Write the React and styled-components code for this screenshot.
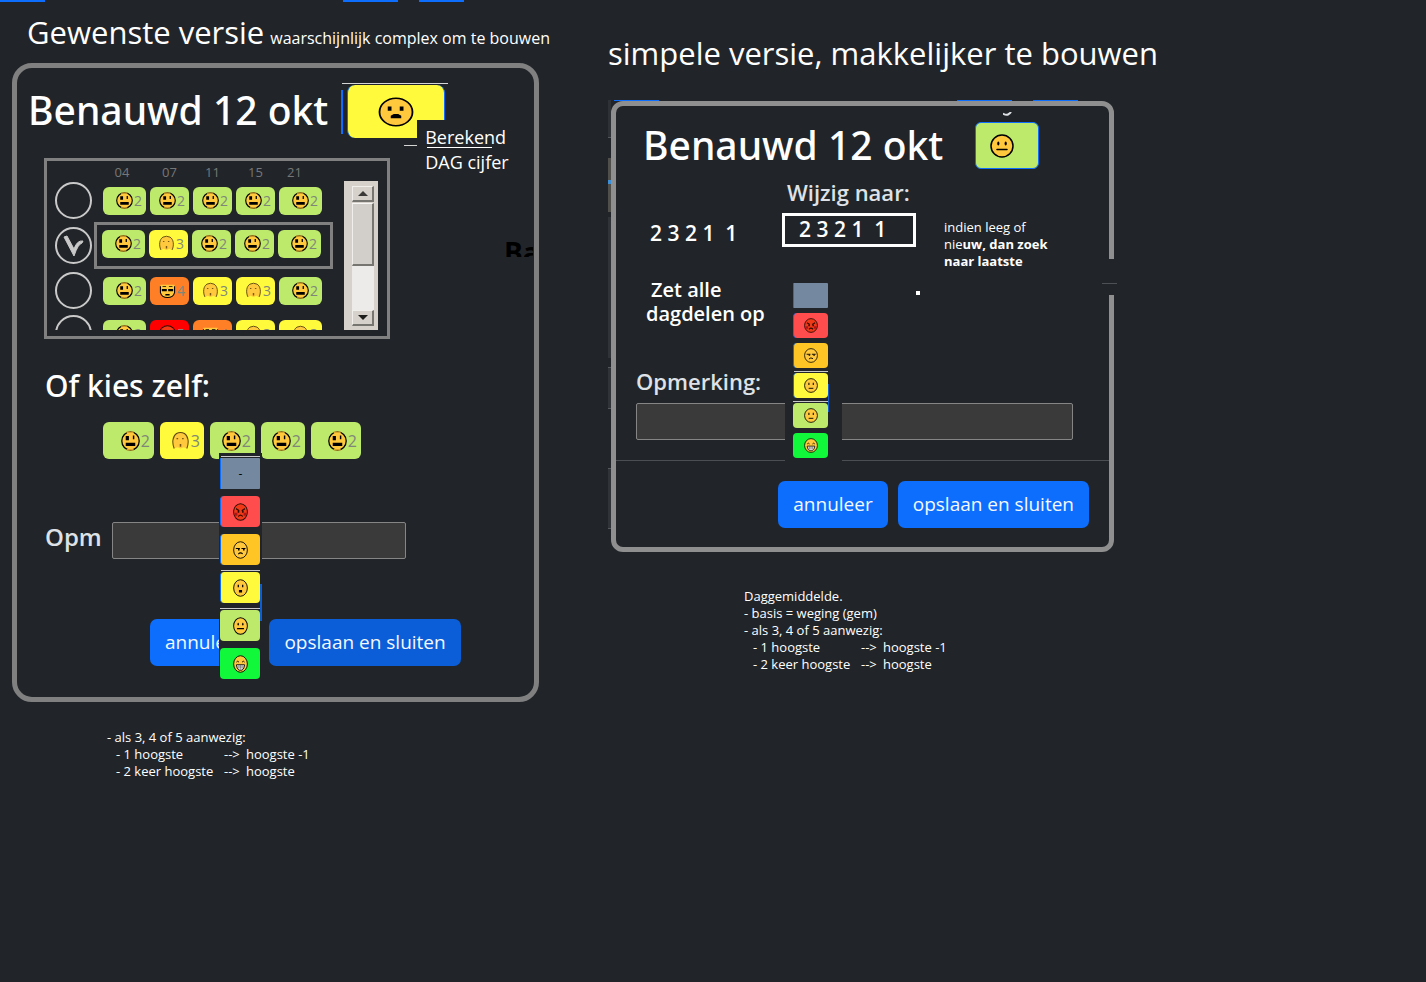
import React from 'react';
import styled, { createGlobalStyle, css } from 'styled-components';

const GlobalStyle = createGlobalStyle`
  * { box-sizing: border-box; }
  body {
    margin: 0;
    background: #212529;
    color: #fff;
    font-family: 'Open Sans', 'Noto Sans', sans-serif;
  }
  h1, h2, h3, p { margin: 0; }
  button, input { font-family: inherit; }
`;

const tones = {
  lime: '#bdea6b',
  yellow: '#fffa3c',
  orange: '#ff7f27',
  amber: '#ffc525',
  red: '#ff0000',
  coral: '#ff4d4d',
  green: '#11f73a',
  slate: '#74899f',
};

/* ---------- faces ---------- */

const FaceSvg = styled.svg`
  display: block;
  flex: none;
  width: ${(p) => p.$w}px;
  height: ${(p) => p.$h || p.$w}px;
`;

const faces = {
  blocky: (
    <>
      <circle cx="12" cy="12" r="11" fill="#ffc83d" stroke="#000" strokeWidth="1.600" />
      <path d="M7 1.500h9M7 22.500h9" stroke="#d9a428" strokeWidth="1.600" />
      <path d="M6 6h4v5H6zM15 5.500h1.800V10H15zM6 14h12v4H6z" fill="#000" />
    </>
  ),
  pale: (
    <>
      <path d="M4 21C1 14 2 6 7 3q5-2.500 10 0c5 3 6 11 3 18l-4-1.500-4 1.500-4-1.500z" fill="#ffc83d" />
      <path d="M4 21C1 14 2 6 7 3q5-2.500 10 0c5 3 6 11 3 18" fill="none" stroke="#5e4710" strokeWidth="1.300" />
      <path d="M7 8.500h2v1.500H7zM14 8.500h2v1.500h-2zM11 15.500h2V19h-2z" fill="#7c5a12" />
    </>
  ),
  weary: (
    <>
      <path d="M2 4h20v11q-2 7-10 7T2 15z" fill="#ffc83d" />
      <path d="M2 6v9q2 7 10 7t10-7V6" fill="none" stroke="#000" strokeWidth="1.500" />
      <path d="M4 10h7v3H4zM13 10h7v3h-7zM9 17h6v2H9zM5 6h5v1H5zM14 6h5v1h-5z" fill="#000" />
    </>
  ),
  frown: (
    <>
      <circle cx="12" cy="12" r="11" fill="#ffc83d" stroke="#000" strokeWidth="1.200" />
      <path d="M6.500 7.500h2.500V11H6.500zM14.500 7.500H17V11h-2.500zM10.500 13.500h3l2 1.500v2h-7v-2z" fill="#000" />
    </>
  ),
  neutral: (
    <>
      <circle cx="12" cy="12" r="11" fill="#ffc83d" stroke="#000" strokeWidth="1.500" />
      <ellipse cx="8.300" cy="9.500" rx="1.100" ry="1.900" />
      <ellipse cx="15.700" cy="9.500" rx="1.100" ry="1.900" />
      <path d="M7 15.500h10" stroke="#000" strokeWidth="1.500" strokeLinecap="round" />
    </>
  ),
  open: (
    <>
      <circle cx="12" cy="12" r="11" fill="#ffc83d" stroke="#000" strokeWidth="1.300" />
      <path d="M7.500 7.500h2V11h-2zM14.500 7.500h2V11h-2zM9.500 14.500h5V18h-5z" fill="#000" />
    </>
  ),
  flat: (
    <>
      <circle cx="12" cy="12" r="11" fill="#ffc83d" stroke="#000" strokeWidth="1.400" />
      <path d="M7.500 7.500h1.800V11H7.500zM15 7.500h1.800V11H15z" fill="#000" />
      <path d="M8 16.500h8" fill="none" stroke="#000" strokeWidth="1.500" />
    </>
  ),
  side: (
    <>
      <circle cx="12" cy="12" r="11" fill="#ffc83d" stroke="#000" strokeWidth="1.300" />
      <path d="M4.500 10H11M13.500 10H20M8.500 17.500q3-3 7-.500" fill="none" stroke="#000" strokeWidth="1.500" />
      <path d="M8 10.500h2.500v2H8zM16 10.500h2.500v2H16z" fill="#000" />
    </>
  ),
  angry: (
    <>
      <circle cx="12" cy="12" r="11" fill="#f03a17" stroke="#2b0b05" strokeWidth="1.500" />
      <path d="M5 7.500l5 3M19 7.500l-5 3M8.500 18q3.500-3.500 7 0" fill="none" stroke="#2b0b05" strokeWidth="1.700" />
      <path d="M7.500 10.500h2.500v2.500H7.500zM14.500 10.500H17v2.500h-2.500z" fill="#2b0b05" />
      <path d="M2.500 13H7v4H3.500zM17 13h4.500l-1 4H17z" fill="#b3121a" />
    </>
  ),
  grin: (
    <>
      <circle cx="12" cy="12" r="11" fill="#ffc83d" stroke="#000" strokeWidth="1.300" />
      <path d="M5.500 9.500q2-2.500 4 0M14.500 9.500q2-2.500 4 0" fill="none" stroke="#000" strokeWidth="1.300" />
      <path d="M5.500 13h13q-1 7.500-6.500 7.500T5.500 13z" fill="#fff" stroke="#000" strokeWidth="1.300" />
      <path d="M9.500 13v6M12 13v7M14.500 13v6M6 16h12" stroke="#555" strokeWidth=".800" />
    </>
  ),
};

const Face = ({ kind, w, h }) => (
  <FaceSvg $w={w} $h={h} viewBox="0 0 24 24" preserveAspectRatio="none" aria-hidden="true">
    {faces[kind]}
  </FaceSvg>
);

/* ---------- page ---------- */

const Board = styled.main`
  display: grid;
  grid-template-columns: minmax(527px, 37%) minmax(507px, 1fr);
  column-gap: 69px;
  align-items: start;
  min-height: 100vh;
  padding: 0 12px;
  position: relative;
`;

const Column = styled.section`
  min-width: 0;
`;

const TabRemnants = styled.div`
  position: absolute;
  z-index: 2;
  top: 0;
  left: 0;
  display: flex;
  height: 2px;
  i { background: #0d6efd; }
  i:nth-child(1) { width: 45px; }
  i:nth-child(2) { width: 55px; margin-left: 298px; }
  i:nth-child(3) { width: 45px; margin-left: 21px; }
  ${(p) => p.$thin && css`
    top: -6px;
    left: -2px;
    height: 1px;
  `}
`;

const Headline = styled.h1`
  display: flex;
  align-items: baseline;
  gap: 6px;
  height: ${(p) => p.$height}px;
  padding-top: ${(p) => p.$top}px;
  padding-left: ${(p) => p.$left}px;
  font-size: 31px;
  font-weight: 400;
  line-height: 40px;
  white-space: nowrap;
  small { font-size: 16px; }
`;

const Dialog = styled.form`
  position: relative;
  width: 100%;
  border: 5px solid ${(p) => p.$line};
  border-radius: ${(p) => p.$radius}px;
`;

const SimpleDialog = styled(Dialog)`
  max-width: 503px;
  margin-left: 3px;
`;

const TitleRow = styled.header`
  display: flex;
  align-items: flex-start;
  padding: ${(p) => p.$pad};
`;

const Title = styled.h2`
  font-family: 'Noto Sans', 'Open Sans', sans-serif;
  font-size: 39px;
  font-weight: 500;
  line-height: 50px;
  white-space: nowrap;
`;

const Button = styled.button`
  height: 47px;
  padding: 0 15px;
  border: 0;
  border-radius: 7px;
  background: ${(p) => (p.$pressed ? '#0b5ed7' : '#0d6efd')};
  color: #f4f8ff;
  font-size: 19px;
  line-height: 47px;
  white-space: nowrap;
`;

const Actions = styled.footer`
  display: flex;
  gap: 10px;
  justify-content: ${(p) => (p.$end ? 'flex-end' : 'flex-start')};
  padding: ${(p) => p.$pad};
`;

const FieldLabel = styled.label`
  color: #dee2e6;
  font-size: ${(p) => p.$size || 22}px;
  font-weight: 600;
  line-height: 30px;
`;

const TextField = styled.input`
  display: block;
  width: 100%;
  height: 37px;
  border: 1px solid #858585;
  border-radius: 2px;
  background: #3b3a3a;
  color: #fff;
  font-size: 16px;
`;

const Tile = styled.button`
  display: flex;
  align-items: center;
  justify-content: flex-end;
  gap: 1px;
  height: ${(p) => p.$height}px;
  padding: 0 4px 0 0;
  border: 0;
  border-radius: 6px;
  background: ${(p) => tones[p.$tone]};
  color: #80877a;
  font-size: ${(p) => (p.$height > 30 ? 16 : 14)}px;
  line-height: 20px;
`;

/* ---------- score menu ---------- */

const Menu = styled.div`
  position: absolute;
  z-index: 3;
  display: flex;
  flex-direction: column;
  background: #212529;
  ${(p) => p.$small ? css`
    top: 10px;
    left: 3px;
    gap: 5px;
    width: 57px;
    padding: 3px 14px 3px 8px;
  ` : css`
    top: 31px;
    left: 9px;
    gap: 7px;
    width: 43px;
    padding: 5px 2px 0 1px;
  `}
  &::after {
    content: '';
    position: absolute;
    right: ${(p) => (p.$small ? 13 : 0)}px;
    top: ${(p) => (p.$small ? 104 : 131)}px;
    width: ${(p) => (p.$small ? 1 : 2)}px;
    height: ${(p) => (p.$small ? 28 : 37)}px;
    background: #0b5ed7;
  }
`;

const MenuItem = styled.button`
  position: relative;
  display: flex;
  align-items: center;
  justify-content: center;
  height: ${(p) => (p.$small ? 25 : 31)}px;
  padding: 0;
  border: 0;
  border-left: ${(p) => (p.$edge ? 1 : 0)}px solid #0d6efd;
  border-radius: ${(p) => (p.$tone === 'slate' ? 1 : 4)}px;
  background: ${(p) => tones[p.$tone]};
  color: #000;
  font-size: 12px;
  line-height: 14px;
  &::before {
    content: '';
    display: ${(p) => (p.$ruled ? 'block' : 'none')};
    position: absolute;
    inset: -2px 0 auto 0;
    height: 1px;
    background: #c9c9c9;
  }
`;

const scores = [
  { tone: 'slate', edge: true, ruledLarge: true },
  { tone: 'coral', face: 'angry', edge: true },
  { tone: 'amber', face: 'side', edge: true },
  { tone: 'yellow', face: 'open', faceSmall: 'flat', edge: true, ruled: true },
  { tone: 'lime', face: 'neutral', faceSmall: 'flat', ruled: true },
  { tone: 'green', face: 'grin' },
];

const ScoreMenu = ({ small }) => (
  <Menu $small={small}>
    {scores.map((s) => (
      <MenuItem
        key={s.tone}
        type="button"
        $small={small}
        $tone={s.tone}
        $edge={s.edge}
        $ruled={s.ruled || (s.ruledLarge && !small)}
        aria-label={s.tone}
      >
        {s.face
          ? <Face kind={(small && s.faceSmall) || s.face} w={small ? 14 : 15} h={small ? 15 : 18} />
          : !small && '-'}
      </MenuItem>
    ))}
  </Menu>
);

/* ---------- left dialog ---------- */

const DayBadge = styled.div`
  position: relative;
  display: flex;
  align-items: center;
  justify-content: center;
  width: 98px;
  height: 53px;
  margin-left: 19px;
  border: solid #0d6efd;
  border-width: 0 1px;
  border-radius: 8px;
  background: #fffa3c;
  &::before {
    content: '';
    position: absolute;
    top: -2px;
    left: -6px;
    width: 106px;
    height: 1px;
    background: #d5d5d5;
  }
  &::after {
    content: '';
    position: absolute;
    top: 5px;
    left: -7px;
    width: 2px;
    height: 44px;
    background: #0d6efd;
  }
`;

const DayCaption = styled.p`
  position: absolute;
  top: 35px;
  left: 69px;
  padding: 5px 4px 0 8px;
  background: #212529;
  font-size: 18px;
  line-height: 25px;
  white-space: nowrap;
  &::before {
    content: '';
    position: absolute;
    top: 27px;
    left: 10px;
    width: 65px;
    height: 1px;
    background: #fff;
  }
  &::after {
    content: '';
    position: absolute;
    top: 25px;
    left: -13px;
    width: 13px;
    height: 1px;
    background: #d5d5d5;
  }
`;

const PresetArea = styled.div`
  display: flex;
  align-items: flex-start;
  padding-left: 27px;
`;

const PresetBox = styled.fieldset`
  display: flex;
  justify-content: space-between;
  width: 346px;
  height: 181px;
  margin: 0;
  padding: 0 9px 6px 8px;
  border: 3px solid #808080;
`;

const PresetList = styled.div`
  flex: none;
  width: 278px;
  overflow: hidden;
`;

const hourColumns = css`
  display: grid;
  grid-template-columns: 43px 39px 39px 39px 43px;
  column-gap: 4px;
`;

const Hours = styled.div`
  ${hourColumns}
  padding: 4px 0 0 48px;
  color: #777;
  font-size: 13px;
  line-height: 14px;
  text-align: center;
  span:first-child { padding-right: 5px; }
  span:last-child { padding-right: 12px; }
`;

const PresetRow = styled.label`
  display: flex;
  align-items: center;
  height: ${(p) => (p.$selected ? 47 : 43)}px;
`;

const RadioSpot = styled.span`
  display: grid;
  flex: none;
  width: 37px;
  height: 37px;
  > * { grid-area: 1 / 1; }
  svg { width: 37px; height: 37px; }
`;

const Radio = styled.input`
  appearance: none;
  width: 37px;
  height: 37px;
  margin: 0;
  border: 2px solid #c9c9c9;
  border-radius: 50%;
`;

const PresetTiles = styled.span`
  ${hourColumns}
  align-items: center;
  margin-left: ${(p) => (p.$selected ? 2 : 11)}px;
  ${(p) => p.$selected && css`
    height: 47px;
    padding: 0 9px 4px 5px;
    border: 3px solid #808080;
  `}
`;

const Scrollbar = styled.div`
  display: flex;
  flex-direction: column;
  width: 34px;
  height: 149px;
  margin-top: 20px;
  padding: 5px 4px 4px 8px;
  background: #d6d2cb;
`;

const ScrollButton = styled.button`
  display: grid;
  place-items: center;
  height: 16px;
  padding: 0;
  border: solid;
  border-width: 1px 2px 2px 1px;
  border-color: #f1efeb #77756f #77756f #f1efeb;
  background: #d6d2cb;
`;

const ScrollThumb = styled.div`
  height: 63px;
  margin-top: 1px;
  border: solid;
  border-width: 1px 2px 2px 1px;
  border-color: #f7f6f4 #77756f #77756f #f1efeb;
  background: #d2cfca;
`;

const ScrollTrack = styled.div`
  flex: 1;
  background: #ecebe9;
`;

const ClippedLetters = styled.span`
  width: 29px;
  height: 22px;
  margin: 77px 0 0 114px;
  overflow: hidden;
  color: #000;
  font-size: 28px;
  font-weight: 700;
  line-height: 34px;
`;

const Subheading = styled.h3`
  padding: 27px 0 0 28px;
  font-family: 'Noto Sans', 'Open Sans', sans-serif;
  font-size: 30px;
  font-weight: 500;
  line-height: 40px;
`;

const Picker = styled.div`
  position: relative;
  display: grid;
  grid-template-columns: 51px 44px 45px 44px 50px;
  column-gap: 6px;
  padding: 16px 0 0 86px;
`;

const MenuAnchor = styled.div`
  position: relative;
  display: grid;
`;

const NoteField = styled.div`
  display: grid;
  grid-template-columns: 67px 294px;
  align-items: start;
  padding: 63px 0 0 28px;
`;

const two = { tone: 'lime', face: 'blocky', n: 2 };
const three = { tone: 'yellow', face: 'pale', n: 3 };
const four = { tone: 'orange', face: 'weary', n: 4 };
const five = { tone: 'red', face: 'angry', n: 5 };

const presets = [
  [two, two, two, two, two],
  [two, three, two, two, two],
  [two, four, three, three, two],
  [two, five, four, three, three],
];

const Score = ({ item, height, ...rest }) => (
  <Tile $tone={item.tone} $height={height} {...rest}>
    <Face kind={item.face} w={height > 30 ? 19 : 17} h={height > 30 ? 20 : 17} />
    {item.n}
  </Tile>
);

/* ---------- right dialog ---------- */

const EdgeRemnants = styled.div`
  position: absolute;
  top: -6px;
  left: -8px;
  width: 3px;
  height: 430px;
  background: linear-gradient(
    #2e3135 0 37px, #55585b 37px 38px, transparent 38px 58px,
    #504f4c 58px 80px, #3d8fd8 80px 84px, #504f4c 84px 112px,
    transparent 112px 117px, #303338 117px 258px, transparent 258px 267px,
    #55585b 267px 268px, #303338 268px 308px, #55585b 308px 309px,
    transparent 309px 368px, #55585b 368px 369px, #303338 369px 428px, #55585b 428px 429px, transparent 429px
  );
`;

const BorderBreak = styled.div`
  position: absolute;
  top: 153px;
  right: -8px;
  width: 15px;
  height: 36px;
  background: linear-gradient(#212529 0 24px, #4d5054 24px 25px, #212529 25px);
`;

const SimpleBadge = styled.div`
  position: relative;
  display: flex;
  align-items: center;
  width: 64px;
  height: 47px;
  margin: 2px 0 0 32px;
  padding-left: 14px;
  border: 1px solid #0d6efd;
  border-radius: 6px;
  background: #bdea6b;
  > svg:last-child {
    position: absolute;
    top: -11px;
    left: 27px;
  }
`;

const Settings = styled.div`
  display: grid;
  grid-template-columns: 146px 134px 1fr;
  align-items: start;
  padding: 7px 0 0 20px;
`;

const ChangeLabel = styled(FieldLabel)`
  grid-column: 2 / 4;
  height: 36px;
  padding-left: 5px;
`;

const CurrentValue = styled.output`
  padding: 6px 0 0 14px;
  font-size: 21px;
  font-weight: 600;
  line-height: 28px;
  white-space: pre;
`;

const ValueInput = styled.input`
  width: 100%;
  height: 34px;
  padding: 0 0 2px 14px;
  border: 3px solid #fff;
  background: transparent;
  color: #fff;
  font-size: 21px;
  font-weight: 600;
`;

const Hint = styled.p`
  padding: 6px 0 0 28px;
  font-size: 13px;
  line-height: 17px;
`;

const SetAll = styled.p`
  margin-top: 8px;
  padding-left: 10px;
  font-size: 20px;
  font-weight: 600;
  line-height: 24px;
  text-indent: 5px;
  white-space: nowrap;
`;

const Dot = styled.i`
  width: 4px;
  height: 4px;
  margin-top: 21px;
  background: #fff;
`;

const Remark = styled.div`
  display: grid;
  gap: 7px;
  padding: 40px 36px 20px 20px;
  border-bottom: 1px solid #4b4f53;
`;

/* ---------- notes ---------- */

const Notes = styled.div`
  padding: ${(p) => p.$pad};
  font-size: 13px;
  line-height: 17px;
  white-space: nowrap;
`;

const RuleRow = styled.div`
  display: grid;
  grid-template-columns: 108px 22px auto;
  justify-content: start;
  padding-left: 9px;
`;

const Rules = () => (
  <>
    <div>- als 3, 4 of 5 aanwezig:</div>
    <RuleRow><span>- 1 hoogste</span><span>--&gt;</span><span>hoogste -1</span></RuleRow>
    <RuleRow><span>- 2 keer hoogste</span><span>--&gt;</span><span>hoogste</span></RuleRow>
  </>
);

export default function App() {
  return (
    <>
      <GlobalStyle />
      <Board>
        <TabRemnants><i /><i /><i /></TabRemnants>
        <Column>
          <Headline $height={63} $top={12} $left={15}>
            Gewenste versie <small>waarschijnlijk complex om te bouwen</small>
          </Headline>
          <Dialog $line="#808080" $radius={20}>
            <TitleRow $pad="17px 0 20px 11px">
              <Title>Benauwd 12 okt</Title>
              <DayBadge>
                <Face kind="frown" w={36} h={30} />
                <DayCaption>Berekend<br />DAG cijfer</DayCaption>
              </DayBadge>
            </TitleRow>
            <PresetArea>
              <PresetBox>
                <PresetList>
                  <Hours>
                    <span>04</span><span>07</span><span>11</span><span>15</span><span>21</span>
                  </Hours>
                  {presets.map((row, r) => (
                    <PresetRow key={r} $selected={r === 1}>
                      <RadioSpot>
                        <Radio type="radio" name="preset" defaultChecked={r === 1} />
                        {r === 1 && (
                          <svg viewBox="0 0 37 37" aria-hidden="true">
                            <path d="M9 10l3-1 7 13q3-9 9-8l-1 2q-4 1-8 13z" fill="#c9c9c9" stroke="#c9c9c9" />
                          </svg>
                        )}
                      </RadioSpot>
                      <PresetTiles $selected={r === 1}>
                        {row.map((item, i) => (
                          <Score key={i} as="span" item={item} height={28} />
                        ))}
                      </PresetTiles>
                    </PresetRow>
                  ))}
                </PresetList>
                <Scrollbar>
                  <ScrollButton type="button" aria-label="omhoog">
                    <svg width="10" height="5" viewBox="0 0 10 5"><path d="M5 0l5 5H0z" fill="#3b3a38" /></svg>
                  </ScrollButton>
                  <ScrollThumb />
                  <ScrollTrack />
                  <ScrollButton type="button" aria-label="omlaag">
                    <svg width="10" height="5" viewBox="0 0 10 5"><path d="M0 0h10L5 5z" fill="#1d1d1c" /></svg>
                  </ScrollButton>
                </Scrollbar>
              </PresetBox>
              <ClippedLetters>Ba</ClippedLetters>
            </PresetArea>
            <Subheading>Of kies zelf:</Subheading>
            <Picker>
              {presets[1].map((item, i) => (
                <MenuAnchor key={i}>
                  <Score item={item} height={37} type="button" />
                  {i === 2 && <ScoreMenu />}
                </MenuAnchor>
              ))}
            </Picker>
            <NoteField>
              <FieldLabel htmlFor="opm" $size={24}>Opm</FieldLabel>
              <TextField id="opm" />
            </NoteField>
            <Actions $pad="60px 0 31px 133px">
              <Button type="button">annuleer</Button>
              <Button type="button" $pressed>opslaan en sluiten</Button>
            </Actions>
          </Dialog>
          <Notes $pad="27px 0 0 95px"><Rules /></Notes>
        </Column>
        <Column>
          <Headline $height={101} $top={33} $left={0}>
            simpele versie, makkelijker te bouwen
          </Headline>
          <SimpleDialog $line="#8f8f8f" $radius={12}>
            <TabRemnants $thin><i /><i /><i /></TabRemnants>
            <EdgeRemnants />
            <BorderBreak />
            <TitleRow $pad="14px 0 0 27px">
              <Title>Benauwd 12 okt</Title>
              <SimpleBadge>
                <Face kind="neutral" w={24} />
                <svg width="9" height="4" viewBox="0 0 9 4" aria-hidden="true">
                  <path d="M0 1.500q3 2 5 1T8 0" fill="none" stroke="#dee2e6" strokeWidth="2" />
                </svg>
              </SimpleBadge>
            </TitleRow>
            <Settings>
              <ChangeLabel htmlFor="naar">Wijzig naar:</ChangeLabel>
              <CurrentValue>{'2 3 2 1  1'}</CurrentValue>
              <ValueInput id="naar" defaultValue={'2 3 2 1  1'} />
              <Hint>indien leeg of<br />nie<b>uw, dan zoek<br />naar laatste</b></Hint>
              <SetAll>Zet alle<br />dagdelen op</SetAll>
              <MenuAnchor><ScoreMenu small /></MenuAnchor>
              <Dot />
            </Settings>
            <Remark>
              <FieldLabel htmlFor="opmerking">Opmerking:</FieldLabel>
              <TextField id="opmerking" />
            </Remark>
            <Actions $end $pad="20px 20px 19px">
              <Button type="button">annuleer</Button>
              <Button type="button">opslaan en sluiten</Button>
            </Actions>
          </SimpleDialog>
          <Notes $pad="36px 0 0 136px">
            <div>Daggemiddelde.</div>
            <div>- basis = weging (gem)</div>
            <Rules />
          </Notes>
        </Column>
      </Board>
    </>
  );
}
